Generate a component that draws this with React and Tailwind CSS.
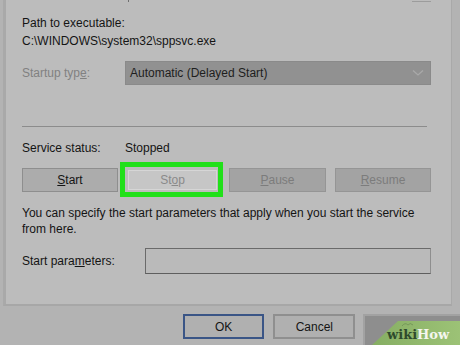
import React from "react";

function Btn({ className = "", children }) {
  return (
    <div className={"flex items-center justify-center h-[24px] border " + className}>
      {children}
    </div>
  );
}

export default function App() {
  return (
    <div
      className="relative w-[460px] h-[345px] overflow-hidden bg-[#b3b3b3] text-[12px] leading-[14px] text-[#141414]"
      style={{ fontFamily: '"Liberation Sans", Arial, sans-serif' }}
    >
      <div className="ml-[3px] w-[449px] h-[306px] bg-[#bcbcbc] border-l-[3px] border-b-2 border-r border-l-[#a9a9a9] border-b-[#a7a7a7] border-r-[#a9a9a9] pl-[16px] pr-[20px] flex flex-col">
        <div className="flex h-[2px] relative">
          <div className="ml-[106px] w-px h-[2px] bg-[#6f6f6f]" />
          <div className="ml-[283px] w-[19px] h-[2px] border-b border-[#9c9c9c]" />
        </div>
        <div className="mt-[14px] h-[14px]">Path to executable:</div>
        <div className="mt-[4px] h-[14px]">C:\WINDOWS\system32\sppsvc.exe</div>
        <div className="mt-[13px] flex items-center h-[24px]">
          <div className="w-[103px] text-[#818181]">
            Startup typ<span className="underline">e</span>:
          </div>
          <div className="w-[306px] h-[24px] bg-[#919191] border border-[#8a8a8a] flex items-center pl-[4px] pr-[6px] text-[#1e1e1e]">
            <span className="flex-1">Automatic (Delayed Start)</span>
            <svg width="12" height="8" viewBox="0 0 12 8">
              <polyline points="1,1.5 6,6 11,1.5" fill="none" stroke="#a9a9a9" strokeWidth="1.3" />
            </svg>
          </div>
        </div>
        <div className="mt-[41px] w-[405px] h-px bg-[#8c8c8c]" />
        <div className="mt-[14px] flex h-[14px]">
          <div className="w-[103px]">Service status:</div>
          <div>Stopped</div>
        </div>
        <div className="mt-[7px] flex items-center h-[35px]">
          <Btn className="w-[96px] bg-[#acacac] border-[#8e8e8e]">
            <span>
              <span className="underline">S</span>tart
            </span>
          </Btn>
          <div className="ml-[2px] w-[103px] h-[35px] border-[5px] border-[#21e01a] bg-[#bdbdbd] flex items-center pl-[3px] pr-[1px]">
            <div className="w-[89px] h-[20px] bg-[#c6c6c6] border border-[#d6d6d6] flex items-center justify-center text-[#8a8a8a]">
              <span>
                St<span className="underline">o</span>p
              </span>
            </div>
          </div>
          <Btn className="ml-[6px] w-[97px] bg-[#a3a3a3] border-[#959595] text-[#7c7c7c]">
            <span>
              <span className="underline">P</span>ause
            </span>
          </Btn>
          <Btn className="ml-[9px] w-[96px] bg-[#a3a3a3] border-[#959595] text-[#7c7c7c]">
            <span>
              <span className="underline">R</span>esume
            </span>
          </Btn>
        </div>
        <div className="mt-[8px] leading-[16px] whitespace-nowrap">
          You can specify the start parameters that apply when you start the service
          <br />
          from here.
        </div>
        <div className="mt-[11px] flex items-center h-[26px]">
          <div className="w-[123px]">
            Start para<span className="underline">m</span>eters:
          </div>
          <div className="w-[286px] h-[26px] bg-[#bababa] border border-t-[#6a6a6a] border-l-[#6a6a6a] border-r-[#8e8e8e] border-b-[#5e5e5e]" />
        </div>
      </div>
      <div className="mt-[8px] flex h-[25px]">
        <div className="ml-[183px] w-[84px] h-[25px] flex items-center justify-center bg-[#b0b0b0] border-2 border-[#3a5586]">
          OK
        </div>
        <div className="ml-[9px] w-[85px] h-[25px] flex items-center justify-center bg-[#b0b0b0] border-2 border-[#8f8f8f]">
          Cancel
        </div>
        <div className="ml-[8px] w-[100px] h-[31px] bg-[#8e8e8e] border-l-2 border-t-2 border-[#a2a2a2]" />
      </div>
      <div className="absolute right-0 bottom-0 w-[90px] h-[25px]">
        <svg className="absolute inset-0" width="90" height="25" viewBox="0 0 90 25">
          <defs>
            <linearGradient id="g" x1="0" y1="0" x2="1" y2="0">
              <stop offset="0" stopColor="#86ae63" />
              <stop offset="1" stopColor="#9cc276" />
            </linearGradient>
          </defs>
          <polygon points="2,25 28,1 90,1 90,25" fill="url(#g)" />
          <path d="M32 6 q3 -4 6 -1 M38 5 q2 -3 5 0" stroke="#6f8f55" strokeWidth="0.8" fill="none" />
        </svg>
        <div
          className="absolute left-[17px] top-[6px] text-[13px] leading-[17px] font-bold whitespace-nowrap"
          style={{ fontFamily: '"DejaVu Serif", serif' }}
        >
          <span className="text-[#2e4a2c]">wiki</span>
          <span className="text-[#f4f6ef]">How</span>
        </div>
      </div>
    </div>
  );
}
